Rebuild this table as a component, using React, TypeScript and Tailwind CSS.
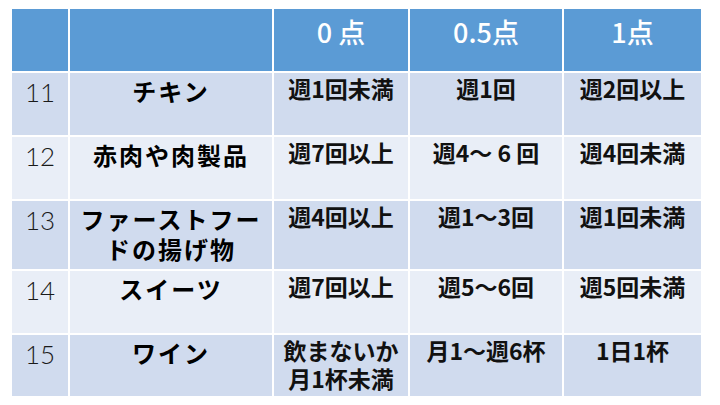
const rows = [
  { no: '11', name: ['チキン'], a: ['週1回未満'], b: ['週1回'], c: ['週2回以上'], h: 'h-[62px]', bg: 'bg-[#d0dbee]' },
  { no: '12', name: ['赤肉や肉製品'], a: ['週7回以上'], b: ['週4〜 6 回'], c: ['週4回未満'], h: 'h-[62px]', bg: 'bg-[#e9eef7]' },
  { no: '13', name: ['ファーストフー', 'ドの揚げ物'], a: ['週4回以上'], b: ['週1〜3回'], c: ['週1回未満'], h: 'h-[68px]', bg: 'bg-[#d0dbee]' },
  { no: '14', name: ['スイーツ'], a: ['週7回以上'], b: ['週5〜6回'], c: ['週5回未満'], h: 'h-[62px]', bg: 'bg-[#e9eef7]' },
  { no: '15', name: ['ワイン'], a: ['飲まないか', '月1杯未満'], b: ['月1〜週6杯'], c: ['1日1杯'], h: 'h-[61px]', bg: 'bg-[#d0dbee]' },
];

const jp = { fontFamily: '"Noto Sans CJK JP", sans-serif' };

function Lines({ lines }: { lines: string[] }) {
  return (
    <>
      {lines.map((l) => (
        <div key={l}>{l}</div>
      ))}
    </>
  );
}

export default function App() {
  return (
    <div className="w-[720px] h-[405px] bg-white pt-[9px] pl-[12px]" style={jp}>
      <div className="grid grid-cols-[56px_202px_134px_152px_137px] gap-[2px] w-[689px]">
        <div className="h-[62px] bg-[#5b9bd5]" />
        <div className="h-[62px] bg-[#5b9bd5]" />
        {['0 点', '0.5点', '1点'].map((t) => (
          <div key={t} className="h-[62px] bg-[#5b9bd5] text-white text-[27px] font-medium leading-[34px] pt-[6px] text-center">
            {t}
          </div>
        ))}
        {rows.map((r) => (
          <div key={r.no} className="contents">
            <div className={`${r.h} ${r.bg} text-center text-[26px] font-light leading-[30px] pt-[4px] text-[#1a1a1a]`} style={{ fontFamily: 'Lato, sans-serif' }}>
              {r.no}
            </div>
            <div className={`${r.h} ${r.bg} text-center text-[24px] font-bold leading-[30px] pt-[3px] tracking-[2px] text-black`}>
              <Lines lines={r.name} />
            </div>
            <div className={`${r.h} ${r.bg} text-center text-[23px] font-bold leading-[28px] pt-[1px] text-[#111]`}>
              <Lines lines={r.a} />
            </div>
            <div className={`${r.h} ${r.bg} text-center text-[23px] font-bold leading-[28px] pt-[1px] text-[#111]`}>
              <Lines lines={r.b} />
            </div>
            <div className={`${r.h} ${r.bg} text-center text-[23px] font-bold leading-[28px] pt-[1px] text-[#111]`}>
              <Lines lines={r.c} />
            </div>
          </div>
        ))}
      </div>
    </div>
  );
}
